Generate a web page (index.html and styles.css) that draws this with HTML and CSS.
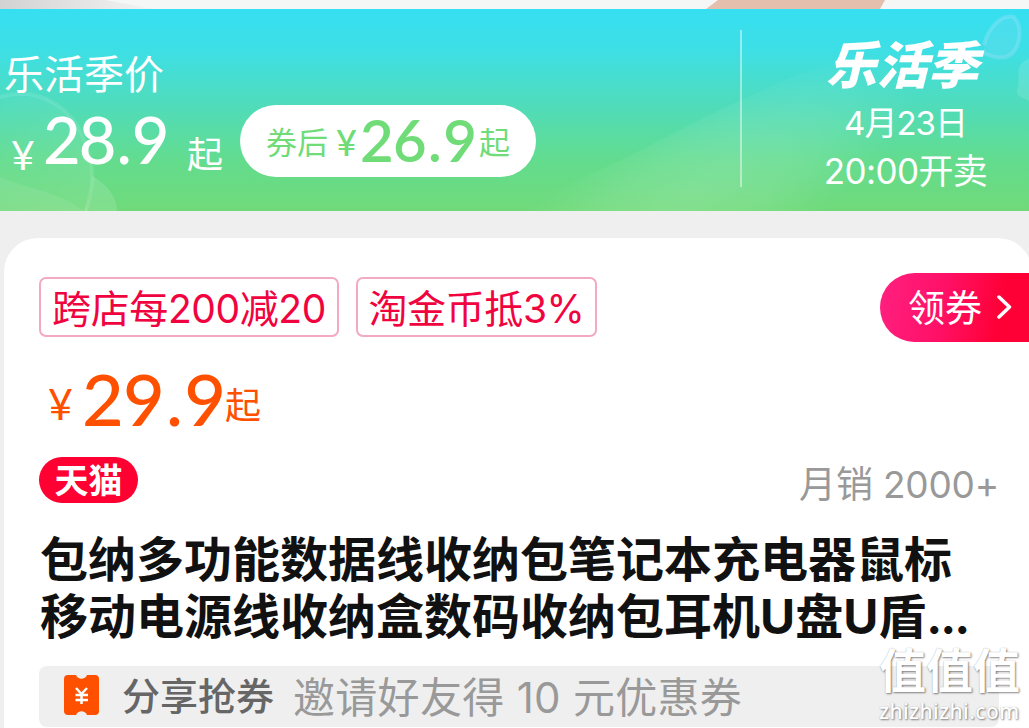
FILE: index.html
```
<!DOCTYPE html>
<html lang="zh-CN">
<head>
    <meta charset="UTF-8">
    <meta name="viewport" content="width=device-width, initial-scale=1.0">
    <title>商品详情</title>
    <link rel="stylesheet" href="styles.css">
</head>
<body>
    <div class="photo-edge">
        <svg width="1029" height="9" viewBox="0 0 1029 9">
            <defs>
                <linearGradient id="grey" x1="0" x2="1">
                    <stop offset="0" stop-color="#d2d2d2"/>
                    <stop offset="1" stop-color="#f4f4f4"/>
                </linearGradient>
            </defs>
            <path d="M0 0H105L155 9H0Z" fill="url(#grey)"/>
            <path d="M718 0H885L880 9H706Z" fill="#e5bfae"/>
        </svg>
    </div>

    <div class="banner">
        <svg class="banner-art" width="1029" height="202" viewBox="0 0 1029 202">
            <defs>
                <radialGradient id="wave" gradientUnits="userSpaceOnUse" cx="0" cy="0" r="1" gradientTransform="translate(700 180) rotate(-28) scale(240 85)">
                    <stop offset="0" stop-color="#fff" stop-opacity=".15"/>
                    <stop offset=".5" stop-color="#fff" stop-opacity=".1"/>
                    <stop offset="1" stop-color="#fff" stop-opacity="0"/>
                </radialGradient>
                <linearGradient id="leaf" x1="0" y1="0" x2="1" y2="1">
                    <stop offset="0" stop-color="#fff" stop-opacity=".02"/>
                    <stop offset="1" stop-color="#fff" stop-opacity=".1"/>
                </linearGradient>
            </defs>
            <path d="M455 202C560 188 610 156 690 116C770 76 840 42 960 20L1029 202Z" fill="url(#wave)"/>
            <path d="M0 88C40 76 78 100 88 143C96 163 92 180 86 202H0Z" fill="url(#leaf)"/>
            <path d="M0 88C40 76 78 100 88 143C96 163 92 180 86 202" fill="none" stroke="#fff" stroke-opacity=".1" stroke-width="4"/>
            <path d="M0 168C28 180 55 181 84 202H0Z" fill="#fff" fill-opacity=".08"/>
            <path d="M92 167C108 176 117 188 117 202H84C91 190 91 180 92 167Z" fill="#fff" fill-opacity=".13"/>
            <path d="M984 36C988 18 1002 5 1014 8C1024 20 1020 43 1006 48C996 50 988 46 984 44" fill="#8fdcf7" fill-opacity=".2" stroke="#a9e5fb" stroke-opacity=".3" stroke-width="4"/>
            <path d="M1029 50C1014 54 1020 68 1018 78C1014 88 1022 88 1029 92Z" fill="#fff" fill-opacity=".12"/>
        </svg>
        <div class="banner-left">
            <div class="season-label">乐活季价</div>
            <div class="banner-row">
                <span class="yen">¥</span>
                <span class="amount">28<span class="point">.</span>9</span>
                <span class="from">起</span>
                <div class="coupon-price">
                    <span class="coupon-text">券后</span>
                    <span class="coupon-yen">¥</span>
                    <span class="coupon-amount">26<span class="point">.</span>9</span>
                    <span class="coupon-text">起</span>
                </div>
            </div>
        </div>
        <div class="divider"></div>
        <div class="banner-right">
            <div class="season-logo">乐活季</div>
            <div class="date">4月23日</div>
            <div class="time">20:00开卖</div>
        </div>
    </div>

    <div class="card">
        <div class="tags">
            <span class="tag">跨店每200减20</span>
            <span class="tag tag-coin">淘金币抵3%</span>
            <a class="get-coupon">
                <span>领券</span>
                <svg width="15" height="26" viewBox="0 0 15 26">
                    <path d="M2 3L12.5 13L2 23" fill="none" stroke="#fff" stroke-width="3.5" stroke-linecap="round" stroke-linejoin="round"/>
                </svg>
            </a>
        </div>

        <div class="price">
            <span class="price-yen">¥</span>
            <span class="price-amount">29<span class="point">.</span>9</span>
            <span class="price-from">起</span>
        </div>

        <div class="shop-row">
            <span class="tmall">天猫</span>
            <span class="sales">月销 2000+</span>
        </div>

        <h1 class="title">包纳多功能数据线收纳包笔记本充电器鼠标<br>移动电源线收纳盒数码收纳包耳机U盘U盾<span class="dots">...</span></h1>

        <div class="share">
            <svg class="ticket" width="35" height="40" viewBox="0 0 35 40">
                <path d="M4 0H12C14 5 21 5 23 0H31Q35 0 35 4V36Q35 40 31 40H23C21 35 14 35 12 40H4Q0 40 0 36V4Q0 0 4 0Z" fill="#ff5000"/>
                <path d="M12 13L17.5 19L23 13M17.5 19V29M11.5 20H24M11.5 25H24" fill="none" stroke="#fff" stroke-width="2.5"/>
            </svg>
            <span class="share-title">分享抢券</span>
            <span class="share-desc">邀请好友得 10 元优惠券</span>
        </div>
    </div>

    <div class="watermark">
        <div class="mark-name">值值值</div>
        <div class="mark-url">zhizhizhi.com</div>
    </div>
</body>
</html>
```
FILE: styles.css
```
* {
    box-sizing: border-box;
}
body {
    margin: 0;
    width: 1029px;
    height: 728px;
    overflow: hidden;
    position: relative;
    background-color: #efefef;
    font-family: Inter, "Noto Sans CJK SC", sans-serif;
    line-height: 1;
    white-space: nowrap;
}
svg {
    display: block;
    flex: none;
}
.photo-edge {
    height: 9px;
    background-color: #f5f6f6;
}

/* banner */
.banner {
    position: relative;
    display: flex;
    height: 202px;
    color: #fff;
    background: linear-gradient(#36dff1 0%, #3ddfe6 20%, #50dcba 48%, #63dc8e 75%, #70da7a 100%);
}
.banner-art {
    position: absolute;
    left: 0;
    top: 0;
}
.banner-left {
    position: relative;
    width: 740px;
    padding-top: 46px;
}
.season-label {
    padding-left: 4px;
    font-size: 40px;
}
.banner-row {
    display: flex;
    align-items: flex-start;
    margin-top: 10px;
}
.yen {
    width: 32px;
    margin: 29px 0 0 11px;
    font-family: Lato, sans-serif;
    font-size: 41px;
}
.amount {
    width: 144px;
    margin-top: 2px;
    font-family: Lato, sans-serif;
    font-size: 65px;
    font-weight: 500;
    letter-spacing: -2px;
}
.point {
    margin: 0 2px;
}
.from {
    width: 53px;
    margin-top: 32px;
    font-size: 36px;
}
.coupon-price {
    display: flex;
    align-items: flex-start;
    width: 296px;
    height: 72px;
    padding: 15px 0 0 26px;
    border-radius: 36px;
    background-color: #fff;
    color: #6fdc78;
}
.coupon-text {
    margin-top: 7px;
    font-size: 31px;
}
.coupon-yen {
    width: 24px;
    margin: 4px 0 0 8px;
    font-family: Lato, sans-serif;
    font-size: 36px;
    font-weight: 500;
}
.coupon-amount {
    width: 119px;
    margin-top: -9px;
    font-family: Lato, sans-serif;
    font-size: 58px;
    font-weight: 600;
    letter-spacing: -0.6px;
}
.divider {
    width: 2px;
    height: 157px;
    margin-top: 21px;
    background-color: rgba(255, 255, 255, 0.45);
}
.banner-right {
    position: relative;
    width: 287px;
    padding: 31px 0 0 40px;
    text-align: center;
}
.season-logo {
    padding-left: 3px;
    font-size: 51px;
    font-weight: 900;
    transform: skewX(-14deg);
}
.date {
    margin-top: 16px;
    font-size: 33px;
    letter-spacing: -1px;
}
.time {
    margin-top: 14px;
    font-size: 35px;
    letter-spacing: -0.6px;
}

/* product card */
.card {
    width: 1028px;
    height: 520px;
    margin: 27px 0 0 4px;
    padding: 35px 0 0 35px;
    border-radius: 34px 34px 0 0;
    background-color: #fff;
}
.tags {
    display: flex;
    align-items: flex-start;
    height: 69px;
}
.tag {
    width: 300px;
    height: 60px;
    margin: 4px 17px 0 0;
    border: 2px solid #f3a9c0;
    border-radius: 7px;
    color: #f0043f;
    font-size: 39px;
    letter-spacing: -0.4px;
    line-height: 60px;
    text-align: center;
}
.tag-coin {
    width: 241px;
}
.get-coupon {
    display: flex;
    align-items: center;
    width: 152px;
    height: 69px;
    margin-left: auto;
    padding: 2px 0 0 28px;
    border-radius: 35px 0 0 35px;
    background: linear-gradient(100deg, #ff2080 0%, #ff1168 40%, #ff0036 78%);
    color: #fff;
    font-size: 37px;
}
.get-coupon svg {
    margin-left: 15px;
    margin-top: -3px;
}
.price {
    display: flex;
    align-items: flex-start;
    height: 85px;
    margin-top: 20px;
    color: #ff5000;
}
.price-yen {
    width: 34px;
    margin: 20px 0 0 9px;
    font-family: Lato, sans-serif;
    font-size: 43px;
}
.price-amount {
    width: 143px;
    font-family: Lato, sans-serif;
    font-size: 72px;
    font-weight: 500;
    letter-spacing: -0.8px;
}
.price-from {
    margin-top: 26px;
    font-size: 36px;
}
.shop-row {
    display: flex;
    justify-content: space-between;
    align-items: center;
    height: 46px;
    margin-top: 10px;
    padding-right: 33px;
}
.tmall {
    width: 99px;
    height: 46px;
    border-radius: 23px;
    background-color: #ff0033;
    color: #fff;
    font-size: 34px;
    font-weight: 700;
    line-height: 47px;
    text-align: center;
}
.sales {
    padding-top: 8px;
    color: #999;
    font-size: 37px;
    letter-spacing: -0.2px;
}
.title {
    height: 114px;
    margin: 28px 0 0 1px;
    color: #111;
    font-size: 48px;
    font-weight: 700;
    line-height: 57px;
}
.dots {
    letter-spacing: -2px;
}
.share {
    display: flex;
    align-items: center;
    width: 960px;
    height: 61px;
    margin-top: 21px;
    padding-left: 25px;
    border-radius: 8px;
    background-color: #efefef;
    font-size: 38px;
}
.ticket {
    margin-top: -3px;
}
.share-title {
    margin: -2px 0 0 23px;
    color: #666;
    font-weight: 500;
}
.share-desc {
    margin: 2px 0 0 19px;
    color: #999;
    font-size: 42px;
    letter-spacing: 0.3px;
}

.watermark {
    position: absolute;
    left: 879px;
    top: 647px;
    width: 142px;
    color: #fff;
    text-shadow: 1px 1px 2px rgba(0, 0, 0, 0.45), 0 0 1px rgba(0, 0, 0, 0.3);
}
.mark-name {
    font-size: 47px;
    font-weight: 700;
}
.mark-url {
    margin-top: 7px;
    font-family: "Noto Sans", sans-serif;
    font-size: 21px;
    font-weight: 500;
    letter-spacing: 0.4px;
    line-height: 20px;
}
```
